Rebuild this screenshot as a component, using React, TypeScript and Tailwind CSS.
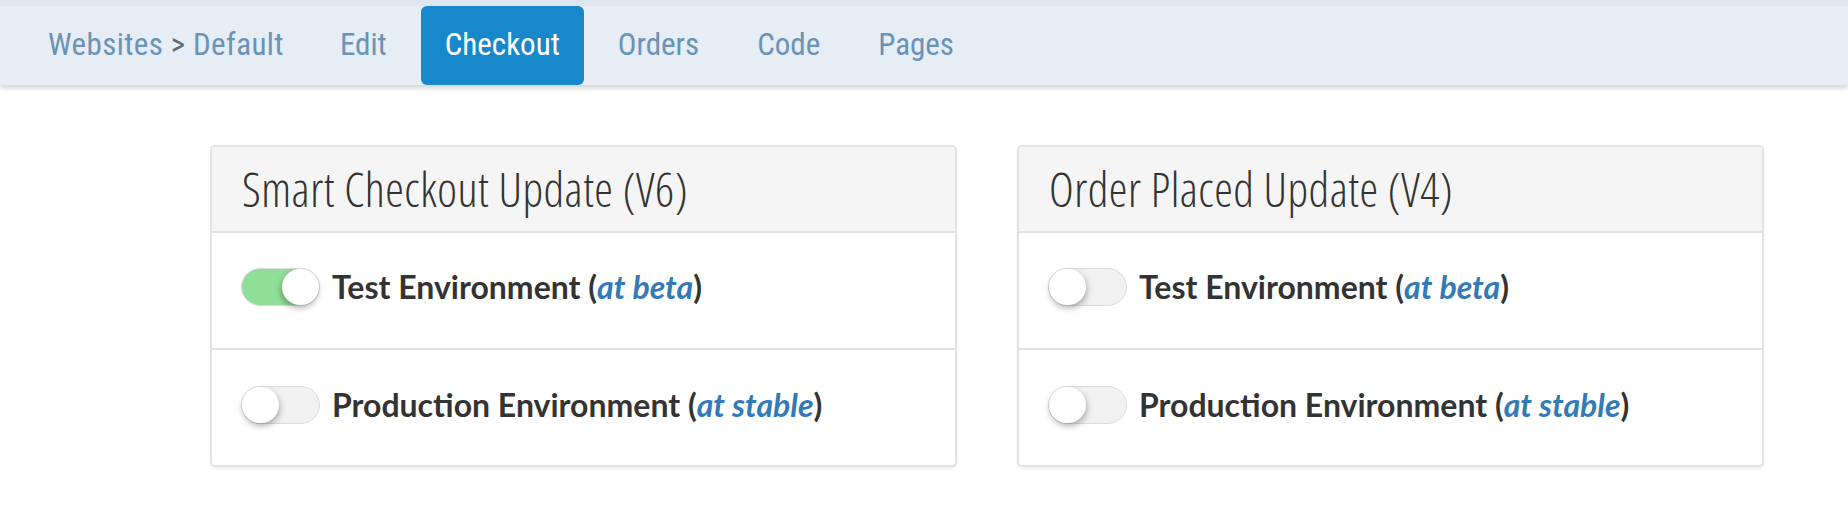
import React from 'react';

const tabs = ['Edit', 'Checkout', 'Orders', 'Code', 'Pages'];

function Toggle({ on }: { on: boolean }) {
  return (
    <div
      className={
        on
          ? 'relative w-[79px] h-[38px] shrink-0 rounded-full bg-[#90df98] border border-[#dcdcdc]'
          : 'relative w-[79px] h-[38px] shrink-0 rounded-full bg-[#f1f1f1] border border-[#dcdcdc]'
      }
    >
      <div
        className={
          on
            ? 'absolute top-0 right-0 w-[37px] h-[36px] rounded-full bg-white shadow-[-1px_3px_6px_rgba(0,0,0,0.3)]'
            : 'absolute top-0 left-0 w-[37px] h-[36px] rounded-full bg-white shadow-[1px_3px_6px_rgba(0,0,0,0.3)]'
        }
      />
    </div>
  );
}

function EnvRow({ label, tag, on, last }: { label: string; tag: string; on: boolean; last?: boolean }) {
  return (
    <div
      className={
        last
          ? 'h-[115px] flex items-center pl-[29px] pb-[6px]'
          : 'h-[117px] flex items-center pl-[29px] pb-[8px] border-b-2 border-[#e2e2e2]'
      }
    >
      <Toggle on={on} />
      <span className="ml-[12px] font-['Lato',sans-serif] font-bold text-[32px] leading-none text-[#333]">
        {label} (<em className="text-[#337ab7]">{tag}</em>)
      </span>
    </div>
  );
}

function Card({ title, testOn }: { title: string; testOn: boolean }) {
  return (
    <div className="w-[747px] rounded-[5px] border-2 border-[#e2e2e2] bg-white shadow-[0_2px_3px_rgba(0,0,0,0.06)] overflow-hidden">
      <div className="h-[86px] bg-[#f5f5f5] border-b-2 border-[#e2e2e2] flex items-center pl-[30px]">
        <h2 className="font-['Open_Sans',sans-serif] [font-stretch:condensed] font-light text-[47px] tracking-[0.5px] text-[#333]">
          {title}
        </h2>
      </div>
      <EnvRow label="Test Environment" tag="at beta" on={testOn} />
      <EnvRow label="Production Environment" tag="at stable" on={false} last />
    </div>
  );
}

export default function App() {
  return (
    <div className="w-[1848px] h-[508px] bg-white overflow-hidden">
      <div className="relative border-t-[6px] border-[#dfe6ee] bg-[#e6edf5] h-[85px] flex items-center pl-[48px] shadow-[0_3px_5px_rgba(0,0,0,0.18)] font-['Roboto_Condensed','Roboto',sans-serif] text-[31px] text-[#6a93b5]">
        <span className="mr-[32px] tracking-[0.4px]">
          Websites <span className="text-[#5b6b7a]">&gt;</span> Default
        </span>
        <div className="flex gap-[10px] h-full">
          {tabs.map((t) => (
            <div
              key={t}
              className={
                t === 'Checkout'
                  ? 'h-[79px] px-[24px] flex items-center rounded-[6px] bg-[#1789ca] text-white'
                  : 'h-[79px] px-[24px] flex items-center'
              }
            >
              {t}
            </div>
          ))}
        </div>
      </div>
      <div className="flex gap-[60px] pl-[210px] pt-[60px]">
        <Card title="Smart Checkout Update (V6)" testOn />
        <Card title="Order Placed Update (V4)" testOn={false} />
      </div>
    </div>
  );
}
